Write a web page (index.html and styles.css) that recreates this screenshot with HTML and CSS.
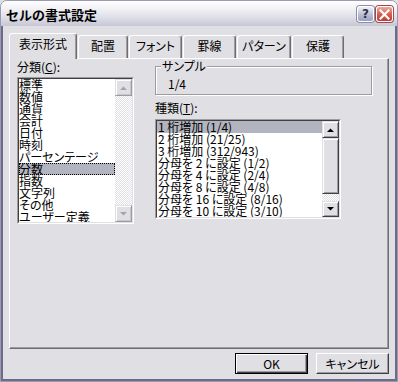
FILE: index.html
```html
<!DOCTYPE html>
<html lang="ja">
<head>
    <meta charset="UTF-8">
    <title>セルの書式設定</title>
    <link rel="stylesheet" href="styles.css">
</head>
<body>
    <div class="window">
        <div class="titlebar">
            <span class="title">セルの書式設定</span>
            <div class="cap-buttons">
                <span class="cap-btn help">?</span>
                <span class="cap-btn close">
                    <svg width="11" height="11" viewBox="0 0 11 11"><path d="M1.5 1.5 L9.5 9.5 M9.5 1.5 L1.5 9.5" stroke="#fff" stroke-width="2.2" stroke-linecap="square"/></svg>
                </span>
            </div>
        </div>

        <div class="client">
            <div class="tabs">
                <div class="tab active">表示形式</div>
                <div class="tab w50">配置</div>
                <div class="tab w53">フォント</div>
                <div class="tab w53">罫線</div>
                <div class="tab w54">パターン</div>
                <div class="tab w52">保護</div>
            </div>

            <div class="panel">
                <div class="col-left">
                    <div class="label">分類(<u>C</u>):</div>
                    <div class="listbox cat-list">
                        <div class="listbox-inner">
                            <ul class="items">
                                <li>標準</li>
                                <li>数値</li>
                                <li>通貨</li>
                                <li>会計</li>
                                <li>日付</li>
                                <li>時刻</li>
                                <li>パーセンテージ</li>
                                <li class="selected focus">分数</li>
                                <li>指数</li>
                                <li>文字列</li>
                                <li>その他</li>
                                <li>ユーザー定義</li>
                            </ul>
                            <div class="scrollbar disabled">
                                <div class="sb-btn"><svg width="7" height="4" viewBox="0 0 7 4"><polygon points="0,4 7,4 3.5,0.5"/></svg></div>
                                <div class="sb-track"></div>
                                <div class="sb-btn"><svg width="7" height="4" viewBox="0 0 7 4"><polygon points="0,0 7,0 3.5,3.5"/></svg></div>
                            </div>
                        </div>
                    </div>
                </div>

                <div class="col-right">
                    <div class="group">
                        <div class="group-caption">サンプル</div>
                        <div class="sample-value">1/4</div>
                    </div>
                    <div class="label type-label">種類(<u>T</u>):</div>
                    <div class="listbox type-list">
                        <div class="listbox-inner">
                            <ul class="items">
                                <li class="selected">1 桁増加 (1/4)</li>
                                <li>2 桁増加 (21/25)</li>
                                <li>3 桁増加 (312/943)</li>
                                <li>分母を 2 に設定 (1/2)</li>
                                <li>分母を 4 に設定 (2/4)</li>
                                <li>分母を 8 に設定 (4/8)</li>
                                <li>分母を 16 に設定 (8/16)</li>
                                <li>分母を 10 に設定 (3/10)</li>
                            </ul>
                            <div class="scrollbar">
                                <div class="sb-btn"><svg width="7" height="4" viewBox="0 0 7 4"><polygon points="0,4 7,4 3.5,0.5"/></svg></div>
                                <div class="sb-thumb"></div>
                                <div class="sb-track"></div>
                                <div class="sb-btn last"><svg width="7" height="4" viewBox="0 0 7 4"><polygon points="0,0 7,0 3.5,3.5"/></svg></div>
                            </div>
                        </div>
                    </div>
                </div>
            </div>

            <div class="buttons">
                <button class="btn default">OK</button>
                <button class="btn">キャンセル</button>
            </div>
        </div>
    </div>
</body>
</html>
```

FILE: styles.css
```css
body {
    margin: 0;
    font-family: "Noto Sans CJK JP", "Liberation Sans", sans-serif;
    font-size: 12px;
    color: #000;
    background-color: #e0dfe3;
}
.window {
    width: 398px;
    height: 382px;
    box-sizing: border-box;
    border: 1px solid #9a9ab2;
    border-radius: 7px 7px 0 0;
    background-color: #e0dfe3;
    display: flex;
    flex-direction: column;
    overflow: hidden;
}
.titlebar {
    height: 25px;
    flex: none;
    display: flex;
    align-items: center;
    justify-content: space-between;
    padding: 0 4px 0 5px;
    background: linear-gradient(#ffffff 0%, #f2f2f6 30%, #dcdce6 70%, #c6c6d6 100%);
}
.title {
    font-size: 13px;
    font-weight: bold;
    line-height: 13px;
    padding-top: 2px;
}
.cap-buttons {
    display: flex;
    gap: 2px;
    padding-top: 1px;
}
.cap-btn {
    width: 17px;
    height: 16px;
    box-sizing: border-box;
    border: 1px solid #fff;
    border-radius: 3px;
    display: flex;
    align-items: center;
    justify-content: center;
    box-shadow: 0 0 0 1px #8a8ea8;
}
.help {
    background: linear-gradient(#eef0f8, #b6bad2 60%, #9aa0c0);
    font-family: "DejaVu Sans", sans-serif;
    font-weight: bold;
    font-size: 12px;
    line-height: 12px;
    color: #2e3048;
}
.close {
    background: linear-gradient(#f0a89c, #d85a4c 55%, #c03c30);
    box-shadow: 0 0 0 1px #a04848;
}
.client {
    flex: 1;
    border: 2px solid #6c6c88;
    border-top: 0;
    padding: 7px 6px 0 6px;
    display: flex;
    flex-direction: column;
}
.tabs {
    display: flex;
    height: 25px;
    align-items: flex-start;
}
.tab {
    position: relative;
    height: 23px;
    margin-top: 2px;
    margin-left: 1px;
    box-sizing: border-box;
    border: 1px solid;
    border-bottom: 0;
    border-color: #fff #6e6e6e #6e6e6e #fff;
    box-shadow: inset -1px 0 #9d9da1;
    border-radius: 3px 3px 0 0;
    padding-top: 4px;
    text-align: center;
    line-height: 12px;
    font-feature-settings: "palt";
    background-color: #e0dfe3;
}
.tab.active {
    width: 68px;
    height: 26px;
    margin-top: 0;
    margin-left: 0;
    z-index: 1;
}
.w50 { width: 50px; }
.w52 { width: 52px; }
.w53 { width: 53px; }
.w54 { width: 54px; }
.panel {
    height: 291px;
    box-sizing: border-box;
    border: 1px solid;
    border-color: #fff #6e6e6e #6e6e6e #fff;
    box-shadow: inset -1px -1px #9d9da1;
    padding: 1px 0 0 7px;
    display: flex;
    gap: 21px;
}
.label {
    line-height: 12px;
    height: 12px;
    font-feature-settings: "palt";
}
.col-left {
    width: 117px;
    padding-top: 1px;
}
.col-left .label {
    margin-bottom: 4px;
}
.col-right {
    width: 217px;
}
.group {
    margin-top: 6px;
    border: 1px solid #9d9da1;
    box-shadow: inset 1px 1px #fff, 1px 1px #fff;
    padding-bottom: 4px;
}
.group-caption {
    width: max-content;
    margin: -7px 0 0 5px;
    padding: 0 1px;
    line-height: 12px;
    background-color: #e0dfe3;
    font-feature-settings: "palt";
}
.sample-value {
    padding: 6px 0 0 12px;
    line-height: 12px;
}
.type-label {
    margin-top: 7px;
    margin-bottom: 5px;
}
.listbox {
    box-sizing: border-box;
    border: 1px solid;
    border-color: #9d9da1 #fff #fff #9d9da1;
}
.listbox-inner {
    height: 100%;
    box-sizing: border-box;
    border: 1px solid;
    border-color: #404040 #e0dfe3 #e0dfe3 #404040;
    background-color: #fff;
    display: flex;
}
.cat-list {
    width: 117px;
    height: 147px;
}
.type-list {
    width: 186px;
    height: 100px;
}
.items {
    list-style: none;
    margin: 0;
    padding: 0;
    flex: 1;
    overflow: hidden;
    font-feature-settings: "palt";
}
.items li {
    height: 12px;
    line-height: 12px;
    white-space: nowrap;
    box-sizing: border-box;
}
.type-list .items li {
    padding-left: 1px;
}
.items li.selected {
    background-color: #b2b4bf;
}
.items li.focus {
    outline: 1px dotted #000;
    outline-offset: -1px;
}
.scrollbar {
    width: 17px;
    display: flex;
    flex-direction: column;
}
.sb-btn, .sb-thumb {
    height: 17px;
    flex: none;
    box-sizing: border-box;
    border: 1px solid;
    border-color: #e0dfe3 #404040 #404040 #e0dfe3;
    box-shadow: inset 1px 1px #fff, inset -1px -1px #9d9da1;
    background-color: #e0dfe3;
    display: flex;
    align-items: center;
    justify-content: center;
}
.sb-btn.last {
    height: 16px;
}
.sb-thumb {
    height: 56px;
}
.sb-track {
    flex: 1;
    background: repeating-conic-gradient(#fff 0 25%, #e0dfe3 0 50%) 0 0 / 2px 2px;
}
.scrollbar svg {
    fill: #000;
}
.scrollbar.disabled .sb-btn {
    border-color: #e0dfe3 #9d9da1 #9d9da1 #e0dfe3;
    box-shadow: inset 1px 1px #fff, inset -1px -1px #c8c8cc;
}
.scrollbar.disabled svg {
    fill: #a4a4ac;
}
.buttons {
    display: flex;
    justify-content: flex-end;
    gap: 8px;
    margin-top: 4px;
}
.btn {
    width: 73px;
    height: 21px;
    padding: 0;
    font-family: inherit;
    font-size: 12px;
    line-height: 12px;
    color: #000;
    background-color: #e0dfe3;
    border: 1px solid;
    border-color: #fff #404040 #404040 #fff;
    box-shadow: inset -1px -1px #9d9da1;
    font-feature-settings: "palt";
}
.btn.default {
    border-color: #000;
    box-shadow: inset 1px 1px #fff, inset -1px -1px #404040, inset -2px -2px #9d9da1;
}
```
